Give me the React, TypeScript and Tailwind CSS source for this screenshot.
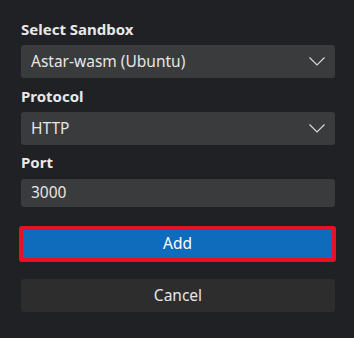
const FONT = { fontFamily: '"Segoe UI", "Noto Sans", "Open Sans", sans-serif' };

function Chevron() {
  return (
    <svg width="16" height="9" viewBox="0 0 16 9" fill="none" className="text-[#d8d8d8]">
      <path d="M0.5 0.5 8 8 15.5 0.5" stroke="currentColor" strokeWidth="1.2" />
    </svg>
  );
}

function Label({ children }: { children: string }) {
  return (
    <div className="h-5 text-[15px] leading-5 font-bold text-[#e8e8e8]">
      {children}
    </div>
  );
}

function Select({ value }: { value: string }) {
  return (
    <div className="mt-[6px] flex h-[33px] items-center justify-between rounded-[3px] bg-[#3a3b3d] pl-[10px] pr-[10px] text-[15.5px] text-[#e6e6e6]">
      <span>{value}</span>
      <Chevron />
    </div>
  );
}

export default function App() {
  return (
    <div
      className="h-[338px] w-[354px] bg-[#202124] pl-[21px] pr-[19px] pt-[19px]"
      style={FONT}
    >
      <Label>Select Sandbox</Label>
      <Select value="Astar-wasm (Ubuntu)" />

      <div className="mt-[8px]">
        <Label>Protocol</Label>
        <Select value="HTTP" />
      </div>

      <div className="mt-[7px]">
        <Label>Port</Label>
        <div className="mt-[7px] flex h-[28px] items-center rounded-[3px] bg-[#3a3b3d] pl-[10px] text-[15.5px] text-[#e6e6e6]">
          3000
        </div>
      </div>

      <button className="-ml-[2px] mt-[19px] flex h-[36px] w-[317px] items-center justify-center rounded-[3px] border-4 border-[#e81123] bg-[#0f6cbd] text-[15.5px] text-white">
        Add
      </button>

      <button className="mt-[17px] flex h-[33px] w-full items-center justify-center rounded-[3px] bg-[#2d2d2e] text-[15.5px] text-[#e6e6e6]">
        Cancel
      </button>
    </div>
  );
}
